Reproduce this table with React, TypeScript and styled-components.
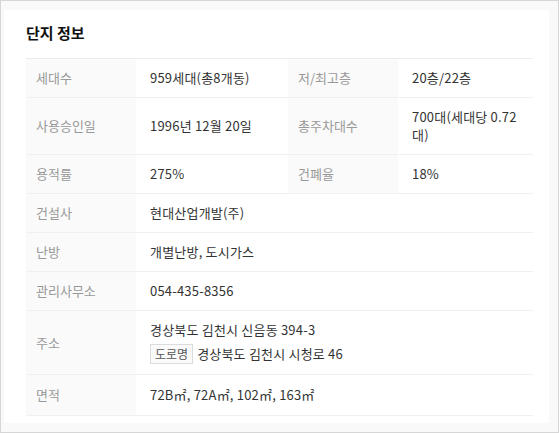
import styled, { createGlobalStyle } from "styled-components";

const GlobalStyle = createGlobalStyle`
  html, body {
    margin: 0;
    padding: 0;
    background: #fff;
  }
  * {
    box-sizing: border-box;
  }
`;

// outer window frame with the faint grey surround
const Frame = styled.div`
  width: 559px;
  height: 433px;
  border: 1px solid #d6d6d6;
  background: #f9f9f9;
  padding: 9px 9px 9px 3px;
  font-family: "Noto Sans CJK KR", "Noto Sans", sans-serif;
`;

const Card = styled.section`
  background: #fff;
  height: 100%;
  padding: 13px 0 0 22px;
`;

const Title = styled.h2`
  margin: 0 0 15px;
  font-size: 15px;
  line-height: 20px;
  font-weight: 700;
  color: #111;
`;

const Table = styled.table`
  width: 507px;
  border-collapse: collapse;
  table-layout: fixed;
  border-top: 1px solid #ececec;
  font-size: 13px;
  line-height: 18px;
`;

const Row = styled.tr`
  border-bottom: 1px solid #f0f0f0;
`;

const Label = styled.th<{ $tall?: boolean }>`
  background: #fafafa;
  color: #999;
  font-weight: 400;
  text-align: left;
  vertical-align: middle;
  padding: ${(p) => (p.$tall ? "11px 10px" : "10px 10px")};
`;

const Value = styled.td`
  color: #333;
  vertical-align: middle;
  padding: 10px 8px 10px 14px;
  word-break: keep-all;
  letter-spacing: 0.2px;
`;

const Line = styled.div<{ $gap?: number }>`
  display: flex;
  align-items: center;
  gap: 4px;
  margin-top: ${(p) => p.$gap ?? 0}px;
`;

const Badge = styled.span`
  display: inline-flex;
  align-items: center;
  height: 20px;
  padding: 0 4px;
  border: 1px solid #dcdcdc;
  background: #fafafa;
  color: #555;
  font-size: 12px;
  letter-spacing: 0;
`;

const App = () => {
  return (
    <>
      <GlobalStyle />
      <Frame>
        <Card>
          <Title>단지 정보</Title>
          <Table>
            <colgroup>
              <col style={{ width: 110 }} />
              <col style={{ width: 152 }} />
              <col style={{ width: 110 }} />
              <col />
            </colgroup>
            <tbody>
              <Row>
                <Label>세대수</Label>
                <Value>959세대(총8개동)</Value>
                <Label>저/최고층</Label>
                <Value>20층/22층</Value>
              </Row>
              <Row>
                <Label>사용승인일</Label>
                <Value>1996년 12월 20일</Value>
                <Label>총주차대수</Label>
                <Value>
                  700대(세대당 0.72
                  <br />
                  대)
                </Value>
              </Row>
              <Row>
                <Label>용적률</Label>
                <Value>275%</Value>
                <Label>건폐율</Label>
                <Value>18%</Value>
              </Row>
              <Row>
                <Label>건설사</Label>
                <Value colSpan={3}>현대산업개발(주)</Value>
              </Row>
              <Row>
                <Label>난방</Label>
                <Value colSpan={3}>개별난방, 도시가스</Value>
              </Row>
              <Row>
                <Label>관리사무소</Label>
                <Value colSpan={3}>054-435-8356</Value>
              </Row>
              <Row>
                <Label>주소</Label>
                <Value colSpan={3}>
                  <Line>경상북도 김천시 신음동 394-3</Line>
                  <Line $gap={5}>
                    <Badge>도로명</Badge>
                    경상북도 김천시 시청로 46
                  </Line>
                </Value>
              </Row>
              <Row>
                <Label $tall>면적</Label>
                <Value colSpan={3}>72B㎡, 72A㎡, 102㎡, 163㎡</Value>
              </Row>
            </tbody>
          </Table>
        </Card>
      </Frame>
    </>
  );
};

export default App;
